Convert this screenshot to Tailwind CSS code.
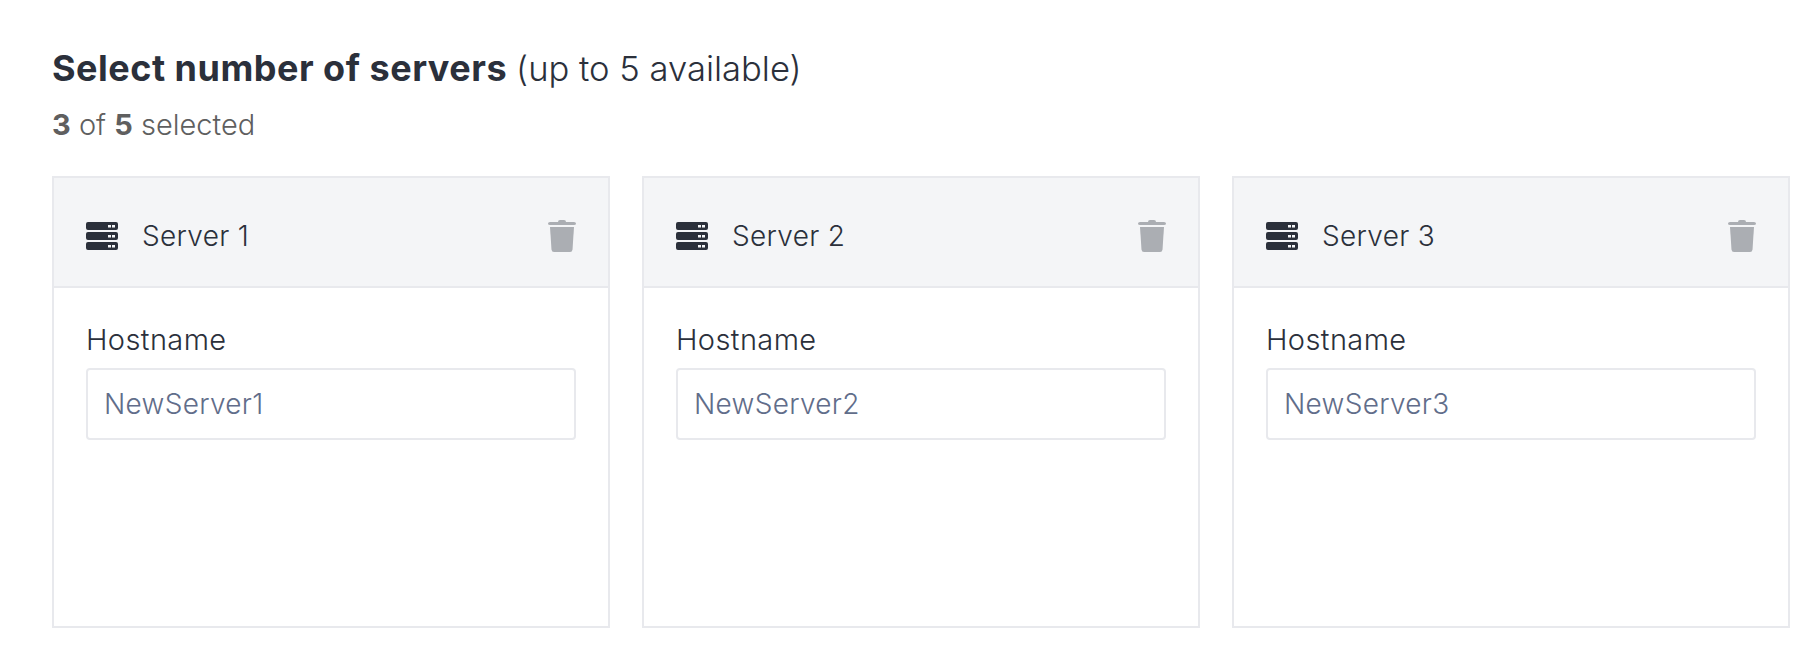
<!DOCTYPE html>
<html lang="en">
<head>
    <meta charset="UTF-8">
    <meta name="viewport" content="width=device-width, initial-scale=1.0">
    <title>Select number of servers</title>
    <script src="https://cdn.jsdelivr.net/npm/@tailwindcss/browser@4"></script>
</head>
<body class="bg-white font-['Inter',sans-serif] text-[#2b303b]">
    <div class="px-[52px] pt-[45px]">
        <h2 class="text-[36px] leading-[46px] font-bold tracking-[0.5px]">Select number of servers <span class="text-[34.6px] font-light tracking-normal">(up to 5 available)</span></h2>
        <p class="mt-[16px] text-[29px] leading-[36px] font-light text-[#5f5f5f]"><b class="font-bold">3</b> of <b class="font-bold">5</b> selected</p>
        <div class="mt-[33px] grid grid-cols-3 gap-[32px] w-[1738px]">

            <div class="h-[452px] border-2 border-[#e8e9ed]">
                <div class="flex h-[110px] items-center border-b-2 border-[#e8e9ed] bg-[#f4f5f7] px-[32px] pt-[8px]">
                    <svg class="w-[32px] h-[28px] fill-[#2b303b]" viewBox="0 0 32 28"><path fill-rule="evenodd" d="M2 0h28a2 2 0 0 1 2 2v4a2 2 0 0 1-2 2H2a2 2 0 0 1-2-2V2a2 2 0 0 1 2-2zm20 3v2.500h3V3zm4 0v2.500h3V3zM2 10h28a2 2 0 0 1 2 2v4a2 2 0 0 1-2 2H2a2 2 0 0 1-2-2v-4a2 2 0 0 1 2-2zm20 3v2.500h3V13zm4 0v2.500h3V13zM2 20h28a2 2 0 0 1 2 2v4a2 2 0 0 1-2 2H2a2 2 0 0 1-2-2v-4a2 2 0 0 1 2-2zm20 3v2.500h3V23zm4 0v2.500h3V23z"/></svg>
                    <span class="ml-[24px] text-[28px] font-light tracking-[0.3px]">Server 1</span>
                    <svg class="ml-auto w-[28px] h-[32px] fill-[#abaeb3]" viewBox="0 0 28 32"><path d="M10 2q0-2 2-2h4q2 0 2 2h8q2 0 2 1.500T26 5H2Q0 5 0 3.500T2 2z"/><path d="M2 7h24l-1.500 22.500q-.2 2.500-2.500 2.500H6q-2.300 0-2.500-2.500z"/></svg>
                </div>
                <div class="px-[32px] pt-[34px]">
                    <label class="block text-[29px] leading-[36px] font-light tracking-[0.4px]">Hostname</label>
                    <div class="mt-[10px] flex h-[72px] items-center rounded-[4px] border-2 border-[#e8e9ed] px-[16px] text-[28px] font-light tracking-[0.3px] text-[#616d8a]">NewServer1</div>
                </div>
            </div>

            <div class="h-[452px] border-2 border-[#e8e9ed]">
                <div class="flex h-[110px] items-center border-b-2 border-[#e8e9ed] bg-[#f4f5f7] px-[32px] pt-[8px]">
                    <svg class="w-[32px] h-[28px] fill-[#2b303b]" viewBox="0 0 32 28"><path fill-rule="evenodd" d="M2 0h28a2 2 0 0 1 2 2v4a2 2 0 0 1-2 2H2a2 2 0 0 1-2-2V2a2 2 0 0 1 2-2zm20 3v2.500h3V3zm4 0v2.500h3V3zM2 10h28a2 2 0 0 1 2 2v4a2 2 0 0 1-2 2H2a2 2 0 0 1-2-2v-4a2 2 0 0 1 2-2zm20 3v2.500h3V13zm4 0v2.500h3V13zM2 20h28a2 2 0 0 1 2 2v4a2 2 0 0 1-2 2H2a2 2 0 0 1-2-2v-4a2 2 0 0 1 2-2zm20 3v2.500h3V23zm4 0v2.500h3V23z"/></svg>
                    <span class="ml-[24px] text-[28px] font-light tracking-[0.3px]">Server 2</span>
                    <svg class="ml-auto w-[28px] h-[32px] fill-[#abaeb3]" viewBox="0 0 28 32"><path d="M10 2q0-2 2-2h4q2 0 2 2h8q2 0 2 1.500T26 5H2Q0 5 0 3.500T2 2z"/><path d="M2 7h24l-1.500 22.500q-.2 2.500-2.500 2.500H6q-2.300 0-2.500-2.500z"/></svg>
                </div>
                <div class="px-[32px] pt-[34px]">
                    <label class="block text-[29px] leading-[36px] font-light tracking-[0.4px]">Hostname</label>
                    <div class="mt-[10px] flex h-[72px] items-center rounded-[4px] border-2 border-[#e8e9ed] px-[16px] text-[28px] font-light tracking-[0.3px] text-[#616d8a]">NewServer2</div>
                </div>
            </div>

            <div class="h-[452px] border-2 border-[#e8e9ed]">
                <div class="flex h-[110px] items-center border-b-2 border-[#e8e9ed] bg-[#f4f5f7] px-[32px] pt-[8px]">
                    <svg class="w-[32px] h-[28px] fill-[#2b303b]" viewBox="0 0 32 28"><path fill-rule="evenodd" d="M2 0h28a2 2 0 0 1 2 2v4a2 2 0 0 1-2 2H2a2 2 0 0 1-2-2V2a2 2 0 0 1 2-2zm20 3v2.500h3V3zm4 0v2.500h3V3zM2 10h28a2 2 0 0 1 2 2v4a2 2 0 0 1-2 2H2a2 2 0 0 1-2-2v-4a2 2 0 0 1 2-2zm20 3v2.500h3V13zm4 0v2.500h3V13zM2 20h28a2 2 0 0 1 2 2v4a2 2 0 0 1-2 2H2a2 2 0 0 1-2-2v-4a2 2 0 0 1 2-2zm20 3v2.500h3V23zm4 0v2.500h3V23z"/></svg>
                    <span class="ml-[24px] text-[28px] font-light tracking-[0.3px]">Server 3</span>
                    <svg class="ml-auto w-[28px] h-[32px] fill-[#abaeb3]" viewBox="0 0 28 32"><path d="M10 2q0-2 2-2h4q2 0 2 2h8q2 0 2 1.500T26 5H2Q0 5 0 3.500T2 2z"/><path d="M2 7h24l-1.500 22.500q-.2 2.500-2.500 2.500H6q-2.300 0-2.500-2.500z"/></svg>
                </div>
                <div class="px-[32px] pt-[34px]">
                    <label class="block text-[29px] leading-[36px] font-light tracking-[0.4px]">Hostname</label>
                    <div class="mt-[10px] flex h-[72px] items-center rounded-[4px] border-2 border-[#e8e9ed] px-[16px] text-[28px] font-light tracking-[0.3px] text-[#616d8a]">NewServer3</div>
                </div>
            </div>

        </div>
    </div>
</body>
</html>
